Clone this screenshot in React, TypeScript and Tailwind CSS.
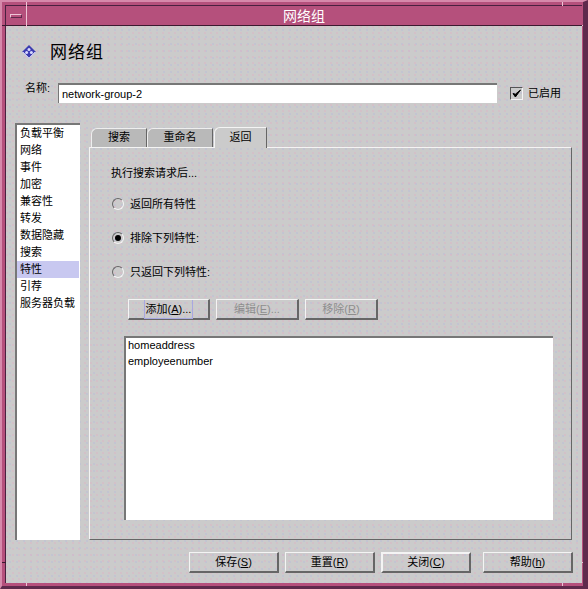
import type { ReactNode } from "react";

const dots =
  "bg-[#cbcbcb] bg-[radial-gradient(circle_at_1px_1px,#dcb4c4_0.6px,transparent_0.8px),radial-gradient(circle_at_4px_4px,#b9bcd8_0.6px,transparent_0.8px)] bg-[length:6px_6px,7px_7px]";

const sideItems = ["负载平衡", "网络", "事件", "加密", "兼容性", "转发", "数据隐藏", "搜索", "特性", "引荐", "服务器负载"];

const Raised = ({ className, children }: { className: string; children: ReactNode }) => (
  <button
    className={`flex h-[21px] items-center justify-center border border-r-2 border-b-2 border-t-[#f4f4f4] border-l-[#f4f4f4] border-r-[#666] border-b-[#666] text-[11px] ${className}`}
  >
    {children}
  </button>
);

const Radio = ({ label, checked, gap }: { label: string; checked?: boolean; gap: string }) => (
  <div className={`flex h-[14px] items-center ${gap}`}>
    <div className="ml-[1px] mr-[6px] flex h-[12px] w-[12px] items-center justify-center rounded-full border-[1.5px] border-t-[#666] border-l-[#666] border-r-[#f4f4f4] border-b-[#f4f4f4]">
      {checked && <div className="h-[6px] w-[6px] rounded-full bg-black" />}
    </div>
    <span className="text-[11px] leading-none">{label}</span>
  </div>
);

export default function App() {
  return (
    <div
      className="relative h-[589px] w-[588px] overflow-hidden border-t-2 border-l-2 border-r-[5px] border-b-[3px] border-t-[#d689ab] border-l-[#d689ab] border-r-[#5f2a4c] border-b-[#5f2a4c] text-black"
      style={{ fontFamily: '"Liberation Sans", "Noto Sans CJK SC", sans-serif' }}
    >
      <div className="h-full border-t-[3px] border-l-[3px] border-r border-b-[3px] border-[#b5507c]">
        <div className="flex h-full flex-col border-t border-l border-[#4a2040]">
          {/* title bar */}
          <div className="flex h-[20px] shrink-0 items-center border-b border-b-[#3c1a30] bg-[#b5507c]">
            <div className="flex h-full w-[20px] items-center justify-center">
              <div className="h-[4px] w-[12px] border border-t-[#eec4d6] border-l-[#eec4d6] border-r-[#5f2a4c] border-b-[#5f2a4c] bg-[#b5507c]" />
            </div>
            <div className="flex-1 text-center text-[14px] leading-none text-white">网络组</div>
          </div>

          <div className={`flex min-h-0 flex-1 flex-col ${dots}`}>
            {/* heading */}
            <div className="flex h-[57px] shrink-0 items-center pb-[5px] pl-[16px]">
              <svg width="14" height="14" viewBox="0 0 14 14">
                <path d="M7 0 14 7 7 14 0 7Z" fill="#3b3bb0" />
                <path d="M7 14 14 7 12.8 7 7 12.8 1.2 7 0 7Z" fill="#fff" />
                <circle cx="7" cy="4.4" r="1.5" fill="#d8d8ff" />
                <circle cx="4.6" cy="7.4" r="1.5" fill="#d8d8ff" />
                <circle cx="9.4" cy="7.4" r="1.5" fill="#d8d8ff" />
              </svg>
              <span className="ml-[14px] text-[17px] leading-none tracking-[1px]">网络组</span>
            </div>

            {/* name row */}
            <div className="flex h-[20px] shrink-0 items-center pl-[19px]">
              <span className="w-[33px] -translate-y-[5px] text-[11px] leading-none">名称:</span>
              <div className="flex h-[20px] w-[439px] items-center border-t-2 border-l border-t-[#777] border-l-[#777] bg-white pl-[3px] text-[11px]">
                network-group-2
              </div>
              <div className="ml-[13px] flex h-[13px] w-[13px] items-center justify-center border border-t-[#555] border-l-[#555] border-r-[#f4f4f4] border-b-[#f4f4f4]">
                <svg width="9" height="9" viewBox="0 0 9 9">
                  <path d="M1 4.5 3.4 8 8.5 1 3.4 5.2Z" fill="#000" stroke="#000" />
                </svg>
              </div>
              <span className="ml-[5px] text-[11px] leading-none">已启用</span>
            </div>

            {/* body */}
            <div className="flex min-h-0 flex-1 pl-[9px] pr-[10px] pt-[20px]">
              <div className="flex h-[417px] w-[65px] shrink-0 flex-col border-t-2 border-l-2 border-t-[#777] border-l-[#777] bg-white">
                {sideItems.map((item) => (
                  <div
                    key={item}
                    className={`mr-[1px] flex h-[17px] shrink-0 items-center whitespace-nowrap pl-[3px] text-[11px] leading-none ${item === "特性" ? "bg-[#c8c8f0]" : ""}`}
                  >
                    {item}
                  </div>
                ))}
              </div>

              <div className="ml-[9px] mt-[1px] flex h-[416px] w-[483px] shrink-0 flex-col pt-[3px]">
                {/* tabs */}
                <div className="flex h-[20px] shrink-0 items-end pl-[2px]">
                  <div className="flex h-[19px] w-[56px] items-center justify-center rounded-tl-[6px] border-t border-l border-r border-t-[#eee] border-l-[#eee] border-r-[#666] bg-[#b9b9b9] pb-[1px] text-[11px] leading-none">
                    搜索
                  </div>
                  <div className="flex h-[19px] w-[66px] items-center justify-center rounded-tl-[6px] border-t border-l border-r border-t-[#eee] border-l-[#eee] border-r-[#666] bg-[#b9b9b9] pb-[1px] text-[11px] leading-none">
                    重命名
                  </div>
                  <div className="relative z-10 -mb-px ml-[1px] flex h-[21px] w-[53px] items-center justify-center rounded-tl-[6px] border-t border-l border-r border-t-[#f4f4f4] border-l-[#f4f4f4] border-r-[#666] bg-[#cbcbcb] pb-[2px] text-[11px] leading-none">
                    返回
                  </div>
                </div>

                {/* tab panel */}
                <div className="flex min-h-0 flex-1 flex-col border border-t-[#f4f4f4] border-l-[#f4f4f4] border-r-[#666] border-b-[#666] pl-[21px] pt-[20px]">
                  <div className="text-[11px] leading-none">执行搜索请求后...</div>
                  <Radio label="返回所有特性" gap="mt-[18px]" />
                  <Radio label="排除下列特性:" checked gap="mt-[20px]" />
                  <Radio label="只返回下列特性:" gap="mt-[20px]" />

                  <div className="ml-[17px] mt-[20px] flex gap-[6px]">
                    <Raised className="w-[82px]">
                      <span className="border-x border-b border-[#a8a8e0] px-[1px] leading-[18px]">
                        添加(<span className="underline">A</span>)...
                      </span>
                    </Raised>
                    <Raised className="w-[83px] text-[#8e8e8e]">
                      编辑(<span className="underline">E</span>)...
                    </Raised>
                    <Raised className="w-[73px] text-[#8e8e8e]">
                      移除(<span className="underline">R</span>)
                    </Raised>
                  </div>

                  <div className="ml-[13px] mt-[16px] flex h-[184px] w-[429px] flex-col border-t-2 border-l-2 border-t-[#777] border-l-[#777] bg-white pl-[2px] text-[11px]">
                    <div className="h-[15px] leading-[15px]">homeaddress</div>
                    <div className="h-[17px] leading-[17px]">employeenumber</div>
                  </div>
                </div>
              </div>
            </div>

            {/* footer buttons */}
            <div className="flex shrink-0 justify-end pb-[10px] pr-[9px]">
              <Raised className="w-[90px]">
                保存(<span className="underline">S</span>)
              </Raised>
              <Raised className="ml-[6px] w-[90px]">
                重置(<span className="underline">R</span>)
              </Raised>
              <Raised className="ml-[6px] w-[90px] border-2 border-r-[#555] border-b-[#555]">
                关闭(<span className="underline">C</span>)
              </Raised>
              <Raised className="ml-[12px] w-[90px]">
                帮助(<span className="underline">h</span>)
              </Raised>
            </div>
          </div>
        </div>
      </div>

      {/* window frame resize ticks */}
      <div className="absolute left-[24px] top-[-2px] h-[28px] w-px bg-[#eec4d6]" />
      <div className="absolute left-[-2px] top-[23px] h-px w-[7px] bg-[#3c1a30]" />
      <div className="absolute left-[560px] top-[-2px] h-[6px] w-px bg-[#eec4d6]" />
      <div className="absolute right-[-5px] top-[23px] h-px w-[6px] bg-[#eec4d6]" />
      <div className="absolute left-[-2px] top-[560px] h-px w-[6px] bg-[#3c1a30]" />
      <div className="absolute bottom-[-3px] left-[24px] h-[6px] w-px bg-[#eec4d6]" />
      <div className="absolute right-[-5px] top-[560px] h-px w-[6px] bg-[#eec4d6]" />
      <div className="absolute bottom-[-3px] left-[560px] h-[6px] w-px bg-[#eec4d6]" />
    </div>
  );
}
